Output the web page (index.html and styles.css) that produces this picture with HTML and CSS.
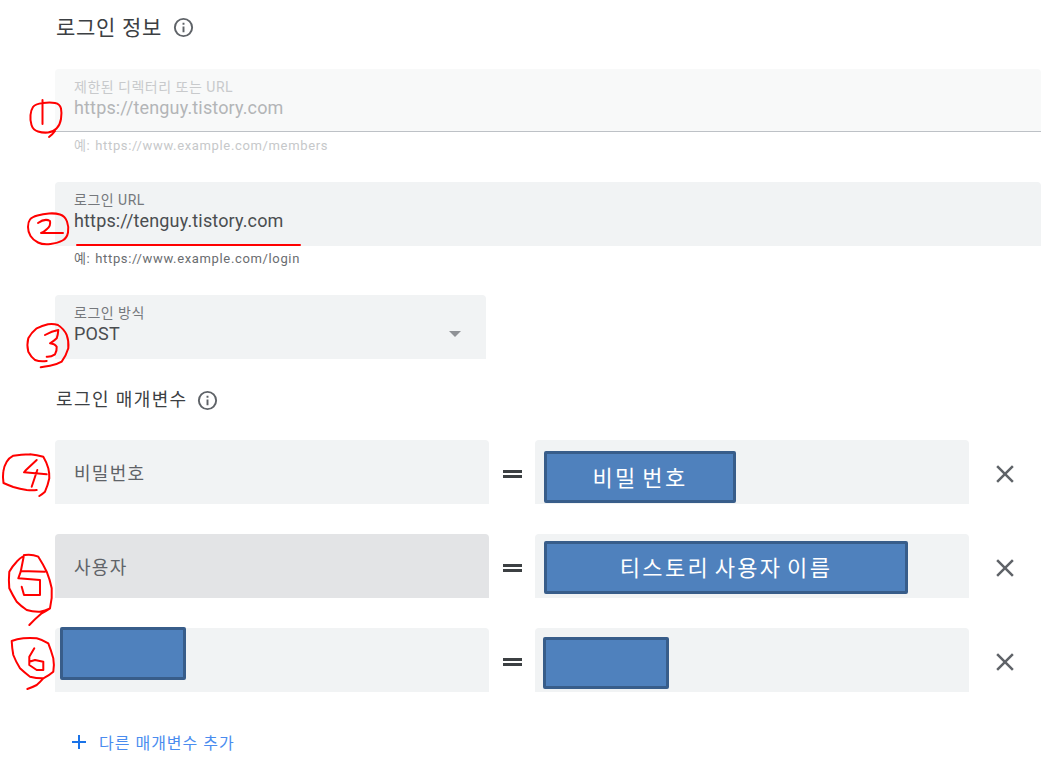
FILE: index.html
```html
<!DOCTYPE html>
<html lang="ko">
<head>
<meta charset="utf-8">
<title>로그인 정보</title>
<link rel="stylesheet" href="styles.css">
</head>
<body>
<main class="page">
  <h2 class="title">로그인 정보
    <svg class="info" viewBox="0 0 24 24"><path d="M11 7h2v2h-2zm0 4h2v6h-2zm1-9a10 10 0 1 0 0 20 10 10 0 0 0 0-20zm0 18a8 8 0 1 1 0-16 8 8 0 0 1 0 16z"/></svg>
  </h2>

  <div class="field field-disabled">
    <span class="label">제한된 디렉터리 또는 URL</span>
    <span class="value">https://tenguy.tistory.com</span>
  </div>
  <p class="hint hint-disabled">예: https://www.example.com/members</p>

  <div class="field field-url">
    <span class="label">로그인 URL</span>
    <span class="value">https://tenguy.tistory.com</span>
  </div>
  <p class="hint">예: https://www.example.com/login</p>

  <div class="field field-select">
    <span class="label">로그인 방식</span>
    <span class="value">POST</span>
    <span class="caret"></span>
  </div>

  <h3 class="subtitle">로그인 매개변수
    <svg class="info" viewBox="0 0 24 24"><path d="M11 7h2v2h-2zm0 4h2v6h-2zm1-9a10 10 0 1 0 0 20 10 10 0 0 0 0-20zm0 18a8 8 0 1 1 0-16 8 8 0 0 1 0 16z"/></svg>
  </h3>

  <div class="params">
    <div class="param">
      <div class="cell cell-name">비밀번호</div>
      <div class="equals"></div>
      <div class="cell cell-val"></div>
      <svg class="close" viewBox="0 0 24 24"><path d="M19 6.41 17.59 5 12 10.59 6.41 5 5 6.41 10.59 12 5 17.59 6.41 19 12 13.41 17.59 19 19 17.59 13.41 12z"/></svg>
    </div>
    <div class="param">
      <div class="cell cell-name cell-hover">사용자</div>
      <div class="equals"></div>
      <div class="cell cell-val"></div>
      <svg class="close" viewBox="0 0 24 24"><path d="M19 6.41 17.59 5 12 10.59 6.41 5 5 6.41 10.59 12 5 17.59 6.41 19 12 13.41 17.59 19 19 17.59 13.41 12z"/></svg>
    </div>
    <div class="param">
      <div class="cell cell-name"></div>
      <div class="equals"></div>
      <div class="cell cell-val"></div>
      <svg class="close" viewBox="0 0 24 24"><path d="M19 6.41 17.59 5 12 10.59 6.41 5 5 6.41 10.59 12 5 17.59 6.41 19 12 13.41 17.59 19 19 17.59 13.41 12z"/></svg>
    </div>
  </div>

  <div class="add">
    <svg class="plus" viewBox="0 0 24 24"><path d="M19 13h-6v6h-2v-6H5v-2h6V5h2v6h6z"/></svg>
    <span>다른 매개변수 추가</span>
  </div>
</main>

<div class="mask mask-a">비밀 번호</div>
<div class="mask mask-b">티스토리 사용자 이름</div>
<div class="mask mask-c"></div>
<div class="mask mask-d"></div>

<svg class="ink" viewBox="0 0 1058 772">
  <path d="M43 103Q35 104 33 107Q31 110 30.5 115Q30 120 31.5 125Q33 130 38 131.5Q43 133 48 132.5Q53 132 56.5 128.5Q60 125 61 119Q62 113 61 108.5Q60 104 55 103Q50 102 43 103M55 131Q53 134 49 137M42.5 100V124"/>
  <path d="M28 227Q28 222 30 219.5Q32 217 37.5 215.5Q43 214 49 213.5Q55 213 60 214.5Q65 216 67 221.5Q69 227 68 232.5Q67 238 62.5 240.5Q58 243 50.5 244Q43 245 38 242.5Q33 240 30.5 236Q28 232 28 227M38 223Q45 218 50 221Q51 226 47 229Q44 232 41 233H63"/>
  <path d="M58 325Q53 323.5 48 324.3Q42 326 36.7 328.3Q31 333 28.3 338.3Q26.5 345 28.3 351.7Q31 357 35 360Q40 362 46.7 361M58 325Q64 329 66.7 335Q69 341 68.3 348.3Q66 356 61.7 361.7Q56 365 50 365.7Q45 366.5 40.7 367.3M45 335Q52 331 58.3 330Q58 335 56.7 338.3Q54 341 50 343.3Q55 344 56.7 346.7Q57 351 55 354.3Q51 357 46.7 356.7"/>
  <path d="M30 454.3Q21 454.5 13.3 455.7Q9 458 6.7 461.7Q4 466 3.3 471.7Q2.5 477 3.5 483Q8 485 13.3 487Q20 489 26.7 490Q32 490.5 36.7 490M30 454.3Q37 455 43.3 456.7Q46.5 462 48.3 468.3Q49.5 473 49.3 478.3Q48 485 45 491.7Q42.5 494 39.3 496M36.7 460L26 470L24 472.3L46.7 474.3M37.3 470L31.7 486.7"/>
  <path d="M25 555Q20 558 16.7 561.7Q12.5 566 9.3 571.7Q8.5 580 9.3 588.3Q12.5 595 16.7 601.7Q21 606 26.7 610Q33 612 40 611.7Q45 610.5 50 608.3Q52.5 598 51.7 588.3Q50 580 46.7 571.7Q43 564 38.3 556.7Q32 554 25 555M50 608.3Q46 611 41.7 613.3Q35 619 29.3 625M24 555L20.7 571.7L18.3 578.3L40 580V595H24L21.7 586.7M20.7 571L45 571.7"/>
  <path d="M11.7 641Q12 648 13.3 655Q16 662 20 668.3Q25 673 30 676.7Q37 678.5 43.3 678.3Q49 675.5 53.3 671.7Q54.5 665 53.3 658.3Q51 650 48.3 643.3Q43 640 36.7 638.3Q30 637.5 23.3 638.3Q17 639 11.7 641M43.3 678.3Q40 682 36.7 685Q32 687.5 27.3 689M34.3 648.3L29.3 656.7V665L36.7 670H43.3V661.7L35 660L29.3 661.7"/>
  <path class="line" d="M77 245H300"/>
</svg>
</body>
</html>
```
FILE: styles.css
```css
*, *::before, *::after { box-sizing: border-box; }
html, body { margin: 0; padding: 0; }
body {
  width: 1058px;
  height: 772px;
  overflow: hidden;
  background: #fff;
  color: #3c4043;
  font-family: Roboto, "Noto Sans CJK KR", sans-serif;
  position: relative;
}
.page {
  display: flex;
  flex-direction: column;
  padding: 14px 17px 0 55px;
}
.title, .subtitle {
  margin: 0;
  padding-left: 1px;
  display: flex;
  align-items: center;
  font-weight: 400;
  color: #3c4043;
}
.title { font-size: 21px; line-height: 28px; height: 27px; letter-spacing: 0.7px; gap: 10px; }
.subtitle { font-size: 18px; line-height: 24px; height: 24px; margin-top: 29px; letter-spacing: 1.4px; gap: 8px; }
.info { width: 23px; height: 23px; fill: #5f6368; flex: none; }
.field {
  background: #f1f3f4;
  border-radius: 4px 4px 0 0;
  height: 64px;
  padding: 9px 19px 0;
  display: flex;
  flex-direction: column;
  position: relative;
}
.field-disabled {
  margin-top: 28px;
  height: 63px;
  background: #f8f9f9;
  border-bottom: 1px solid #bdc1c6;
}
.field-url { margin-top: 27px; }
.field-select { width: 431px; margin-top: 26px; }
.label { font-size: 14px; line-height: 18px; letter-spacing: 0.5px; color: #75787c; }
.field-disabled .label { color: #c8cacc; }
.value { font-size: 18px; line-height: 24px; letter-spacing: 0.15px; color: #4a4d50; }
.field-disabled .value { color: #b3b5b7; }
.hint {
  margin: 0;
  padding: 4px 19px 0;
  font-size: 13px;
  line-height: 18px;
  height: 23px;
  letter-spacing: 0.65px;
  word-spacing: 1px;
  color: #6a6d70;
}
.hint-disabled { color: #c6c8ca; padding-top: 5px; }
.caret {
  position: absolute;
  right: 25px;
  top: 36px;
  border: 6px solid transparent;
  border-top-color: #8f9296;
  border-bottom: 0;
}
.params {
  display: flex;
  flex-direction: column;
  gap: 30px;
  margin-top: 28px;
}
.param { display: flex; align-items: center; height: 64px; }
.cell {
  height: 64px;
  background: #f1f3f4;
  border-radius: 4px 4px 0 0;
  display: flex;
  align-items: center;
  padding: 0 19px;
  font-size: 18px;
  letter-spacing: 1.3px;
  color: #5f6368;
}
.cell-name { width: 434px; }
.cell-hover { background: #e3e4e6; }
.cell-val { width: 434px; }
.equals {
  width: 46px;
  flex: none;
  position: relative;
  height: 10px;
}
.equals::before {
  content: "";
  position: absolute;
  left: 14px;
  top: 3px;
  width: 19px;
  height: 8px;
  border-top: 3px solid #3c4043;
  border-bottom: 3px solid #3c4043;
}
.close { width: 30px; height: 30px; fill: #5f6368; margin: 4px 0 0 21px; flex: none; }
.add {
  display: flex;
  align-items: center;
  gap: 8px;
  margin-top: 38px;
  padding-left: 12px;
  height: 24px;
  color: #4a8cef;
  font-size: 16px;
  letter-spacing: 1px;
}
.plus { width: 24px; height: 24px; fill: #1a73e8; flex: none; }

/* Redaction boxes painted over the screenshot */
.mask {
  position: absolute;
  background: #4f81bd;
  border: 3px solid #385d8a;
  border-radius: 2px;
  color: #fff;
  display: flex;
  align-items: center;
  justify-content: center;
  font-size: 22px;
  letter-spacing: 2.3px;
  word-spacing: -3px;
  padding-bottom: 3px;
}
.mask-a { left: 544px; top: 451px; width: 192px; height: 52px; }
.mask-b { left: 544px; top: 541px; width: 364px; height: 53px; }
.mask-c { left: 60px; top: 627px; width: 126px; height: 53px; }
.mask-d { left: 543px; top: 637px; width: 126px; height: 52px; }

/* Hand-drawn annotations */
.ink {
  position: absolute;
  left: 0;
  top: 0;
  width: 1058px;
  height: 772px;
  fill: none;
  stroke: #f00;
  stroke-width: 2;
  stroke-linecap: round;
  stroke-linejoin: round;
  pointer-events: none;
}
```
